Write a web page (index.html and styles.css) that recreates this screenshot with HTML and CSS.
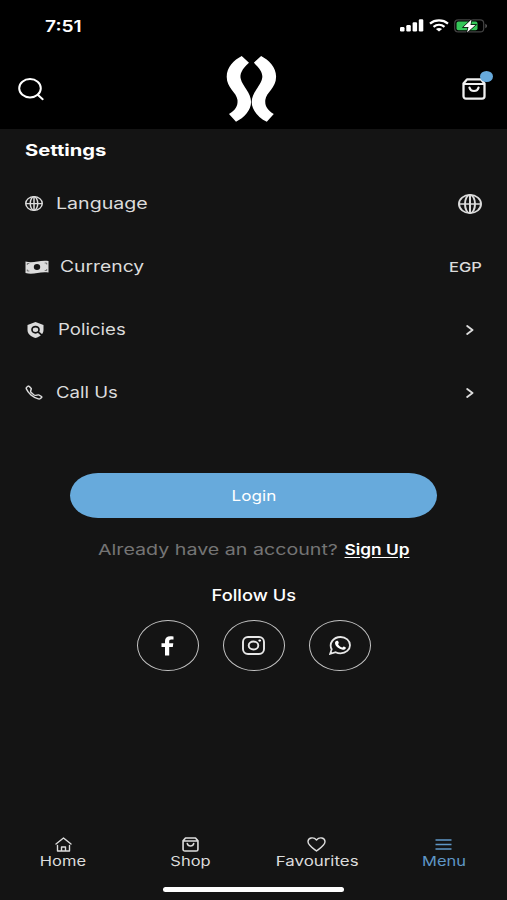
FILE: index.html
```html
<!DOCTYPE html>
<html lang="en">
<head>
<meta charset="utf-8">
<title>Settings</title>
<link rel="stylesheet" href="styles.css">
</head>
<body>
<svg class="defs" width="0" height="0">
  <symbol id="globe" viewBox="0 0 24 24" preserveAspectRatio="none"><g fill="none" stroke="currentColor" stroke-width="2"><ellipse cx="12" cy="12" rx="11" ry="11"/><ellipse cx="12" cy="12" rx="5" ry="11"/><path d="M12 1v22M1 12h22"/></g></symbol>
  <symbol id="bag" viewBox="0 0 24 24" preserveAspectRatio="none"><g fill="none" stroke="currentColor" stroke-width="2.300" stroke-linejoin="round" stroke-linecap="round"><path d="M1.500 6 5 1.500h14L22.500 6v14a2.500 2.500 0 0 1-2.500 2.500H4A2.500 2.500 0 0 1 1.500 20ZM2 6.500h20M7.500 10.500c1 5 8 5 9 0"/></g></symbol>
  <symbol id="chevron" viewBox="0 0 8 10" preserveAspectRatio="none"><path d="M1.200 1 6.500 5 1.200 9" fill="none" stroke="currentColor" stroke-width="1.900" stroke-linecap="round" stroke-linejoin="round"/></symbol>
</svg>
<div class="screen">
  <header class="top">
    <div class="status">
      <span class="t time">7:51</span>
      <div class="indicators">
        <svg width="24" height="13" viewBox="0 0 24 13" fill="#fff"><rect y="8" width="4.500" height="4.500" rx="1.200"/><rect x="6.300" y="6" width="4.500" height="6.500" rx="1.200"/><rect x="12.600" y="3.200" width="4.500" height="9.300" rx="1.200"/><rect x="18.800" y=".3" width="4.500" height="12.200" rx="1.200"/></svg>
        <svg width="20" height="13" viewBox="0 0 20 13"><g fill="none" stroke="#fff" stroke-width="2.200"><path d="M1 4.600C6 .3 14 .3 19 4.600M4.500 7.900c3.300-2.700 7.700-2.700 11 0"/></g><path d="M6.900 10c2-1.400 4.200-1.400 6.200 0L10 12.600Z" fill="#fff"/></svg>
        <svg width="34" height="14" viewBox="0 0 34 14"><rect x=".7" y=".9" width="29" height="12" rx="3.500" fill="none" stroke="#444" stroke-width="1.200"/><rect x="2.500" y="2.600" width="21" height="8.600" rx="1.800" fill="#35c759"/><path d="M31.300 4.800c2.300.8 2.300 3.600 0 4.400Z" fill="#555"/><path d="M17.500.5 9.500 8h5l-1.500 5.500L21.500 6h-5Z" fill="#fff" stroke="#000" stroke-width="1.300" paint-order="stroke"/></svg>
      </div>
    </div>
    <div class="bar">
      <svg class="search" width="27" height="23" viewBox="0 0 27 23"><g fill="none" stroke="#fff" stroke-width="2" stroke-linecap="round"><ellipse cx="12" cy="10.200" rx="10.800" ry="9.200"/><path d="m19.700 16.700 5 4.500"/></g></svg>
      <svg class="logo" width="52" height="68" viewBox="0 0 52 68" fill="#fff"><path id="strand" d="M15.700 1 23 7.700C16 14 13.500 19 14.800 24 16.500 31 25.100 38 25.100 47c0 8-7.100 16-15.100 19.700L3 59c6.500-4 9-8 8.500-14C10.500 37 .7 33 .7 21.700.7 12 8 5 15.700 1Z"/><use href="#strand" transform="translate(50.800 0) scale(-1 1)"/></svg>
      <div class="cart"><svg width="24" height="22"><use href="#bag"/></svg><i class="dot"></i></div>
    </div>
  </header>
  <main>
    <h1><span class="t heading">Settings</span></h1>
    <ul class="rows">
      <li><svg class="lead" width="18" height="15"><use href="#globe"/></svg><span class="t label language">Language</span><svg class="globe" width="24" height="20"><use href="#globe"/></svg></li>
      <li><svg class="lead cash" width="24" height="14" viewBox="0 0 24 14"><path d="M.5 1.500c8 2.500 14-2 23-.5v11.500c-9-1.500-15 3-23 .5Z" fill="currentColor"/><ellipse cx="12" cy="7" rx="3.200" ry="3" fill="#141414"/><path d="M2.300 5V3.500h2M21.700 4.500V3h-2M2.300 9.500V11h2M21.700 9v1.500h-2" stroke="#141414" fill="none" stroke-width=".5"/></svg><span class="t label currency">Currency</span><span class="t egp">EGP</span></li>
      <li><svg class="lead shield" width="17" height="16" viewBox="0 0 17 16"><path d="M8.500 0 16.500 3v5c0 4-3.500 6.800-8 8-4.500-1.200-8-4-8-8V3Z" fill="currentColor"/><g fill="none" stroke="#141414" stroke-width="1.700"><ellipse cx="8.500" cy="7.700" rx="3.500" ry="3.100"/><path d="m10.800 9.700 4.400 3.800"/></g></svg><span class="t label policies">Policies</span><svg class="chev" width="8" height="10"><use href="#chevron"/></svg></li>
      <li><svg class="lead" width="18" height="15" viewBox="0 0 16 16" preserveAspectRatio="none"><path d="M3.650 1.330a.68.68 0 0 0-1.010-.06L1.600 2.300c-.48.49-.66 1.170-.45 1.770a17.600 17.600 0 0 0 4.170 6.610 17.600 17.600 0 0 0 6.610 4.170c.6.200 1.280.03 1.770-.45l1.030-1.030a.68.68 0 0 0-.06-1.020l-2.310-1.790a.68.68 0 0 0-.58-.12l-2.190.55a1.750 1.750 0 0 1-1.660-.46L5.480 8.060a1.750 1.750 0 0 1-.46-1.660l.55-2.190a.68.68 0 0 0-.12-.58Z" fill="none" stroke="currentColor" stroke-width="1.350"/></svg><span class="t label call">Call Us</span><svg class="chev" width="8" height="10"><use href="#chevron"/></svg></li>
    </ul>
    <button class="login"><span class="t">Login</span></button>
    <p class="signup"><span class="t already">Already have an account?</span><a class="t">Sign Up</a></p>
    <h2><span class="t">Follow Us</span></h2>
    <div class="social">
      <a><svg width="14" height="20" viewBox="0 0 14 20"><path d="M4 19.500V11H.5V7.300H4V5c0-3.300 2-4.800 5.200-4.800 1.500 0 2.800.1 3.300.2v3.200h-2.200C8.600 3.600 8.200 4.400 8.200 5.500v1.800h4.100l-.5 3.700H8.200v8.500Z" fill="#fff"/></svg></a>
      <a><svg width="23" height="19" viewBox="0 0 23 19"><g fill="none" stroke="#e8e8e8" stroke-width="1.900"><rect x="1" y="1" width="21" height="17" rx="5"/><ellipse cx="11.500" cy="9.500" rx="4.800" ry="4"/></g><ellipse cx="17.700" cy="4.600" rx="1.400" ry="1.100" fill="#fff"/></svg></a>
      <a><svg width="22" height="19" viewBox="0 0 22 19"><path d="M1.200 17.800 2.700 13.200C-.5 7.300 4.500 1 11.500 1c5.300 0 9.500 3.700 9.500 8.200s-4.200 8.100-9.500 8.100c-1.800 0-3.400-.4-4.800-1.100Z" fill="none" stroke="#e8e8e8" stroke-width="1.800"/><path d="M8 4.800c.8-.2 1.200.3 1.800 2 .2.600-.9 1-.7 1.500.8 1.500 2.200 2.600 4 3.200.6.200 1.100-1.200 1.700-1 2.300.8 2.200 1.100 1.900 2.100-.4 1-2 1.400-3 1.200-4-.7-7.700-3.700-7.700-6.700 0-1 .8-2.200 2-2.300Z" fill="#fff"/></svg></a>
    </div>
  </main>
  <nav>
    <a><svg width="17" height="15" viewBox="0 0 17 15"><g fill="none" stroke="currentColor" stroke-width="1.400" stroke-linecap="round" stroke-linejoin="round"><path d="m1 7 7.500-6L16 7M2.500 8.500V14h12V8.500M6.500 14v-4h4v4"/></g></svg><span class="t home">Home</span></a>
    <a><svg width="17" height="15"><use href="#bag"/></svg><span class="t shop">Shop</span></a>
    <a><svg width="19" height="15" viewBox="0 0 19 15"><path d="M9.500 14C5 10.500 1 8 1 4.700 1 .8 6.500-.6 9.500 3c3-3.600 8.500-2.200 8.500 1.700C18 8 14 10.500 9.500 14Z" fill="none" stroke="currentColor" stroke-width="1.400" stroke-linejoin="round"/></svg><span class="t fav">Favourites</span></a>
    <a class="active"><svg width="17" height="15" viewBox="0 0 17 15"><path d="M.5 3h16M.5 7.500h16M.5 12h16" stroke="currentColor" stroke-width="1.300"/></svg><span class="t menu">Menu</span></a>
  </nav>
  <div class="indicator"></div>
</div>
</body>
</html>
```
FILE: styles.css
```css
* { box-sizing: border-box; margin: 0; padding: 0; }
body { background: #141414; font-family: Inter, "Open Sans", sans-serif; color: #dcdcdc; }
svg { display: block; flex: none; }
.defs { position: absolute; }
.screen { width: 507px; height: 900px; display: flex; flex-direction: column; overflow: hidden; }
.t { display: inline-block; white-space: nowrap; transform: scaleX(1.22); }

.top { height: 129px; background: #000; flex: none; }
.status { height: 51px; display: flex; align-items: center; justify-content: space-between; padding: 0 19px 0 45px; }
.time { font-size: 16px; font-weight: 600; color: #fff; transform-origin: left; transform: scaleX(1.2); }
.indicators { display: flex; align-items: center; gap: 5px; }
.bar { height: 76px; display: grid; grid-template-columns: 1fr auto 1fr; align-items: center; padding: 0 21px 0 18px; }
.cart { justify-self: end; position: relative; color: #f0f0f0; }
.dot { position: absolute; left: 18px; top: -7px; width: 13px; height: 11px; border-radius: 50%; background: #67aadc; }

main { flex: 1; }
h1 { height: 43px; padding-left: 25px; font-size: 16px; line-height: 43px; }
.heading { font-weight: 700; color: #fff; transform-origin: left; transform: scaleX(1.26); }
.rows { list-style: none; padding: 0 25px; display: grid; grid-auto-rows: 63px; }
.rows li { display: flex; align-items: center; }
.label { font-size: 15.500px; line-height: 20px; padding-top: 1px; margin-left: 13px; margin-right: auto; transform-origin: left; }
.language { transform: scaleX(1.265); }
.currency { transform: scaleX(1.245); }
.policies, .call { transform: scaleX(1.2); }
.cash + .label { margin-left: 11px; }
.shield { margin-left: 2px; }
.shield + .label { margin-left: 14px; }
.chev { margin-right: 8px; }
.egp { font-size: 13.500px; font-weight: 500; transform-origin: right; }

.login { display: flex; align-items: center; justify-content: center; width: 367px; height: 45px; margin: 49px 0 0 70px; border: 0; border-radius: 28px / 22.500px; background: #67aadc; color: #fff; font: 400 14.500px Inter, sans-serif; }
.login .t { transform: scaleX(1.18); }
.signup { display: flex; justify-content: space-between; align-items: center; height: 62px; padding: 0 98px; font-size: 15px; }
.already { color: #747474; transform-origin: left; transform: scaleX(1.31); }
.signup a { color: #fff; font-weight: 600; text-decoration: underline; text-underline-offset: 2px; transform-origin: right; transform: scaleX(1.15); }
h2 { text-align: center; font-size: 15.500px; font-weight: 500; line-height: 32px; height: 40px; color: #fff; }
h2 .t { transform: scaleX(1.18); }
.social { display: flex; justify-content: center; gap: 24px; }
.social a { width: 62px; height: 51px; border: 1.500px solid #c4c4c4; border-radius: 50%; display: flex; align-items: center; justify-content: center; }

nav { display: grid; grid-template-columns: repeat(4, 1fr); height: 50px; flex: none; }
nav a { display: flex; flex-direction: column; align-items: center; }
nav .t { font-size: 13.500px; line-height: 17px; margin-top: 1px; }
nav .fav { transform: scaleX(1.25); }
.active { color: #5f97c6; }
.indicator { width: 181px; height: 5px; border-radius: 3px; background: #fff; margin: 0 0 8px 163px; flex: none; }
```
